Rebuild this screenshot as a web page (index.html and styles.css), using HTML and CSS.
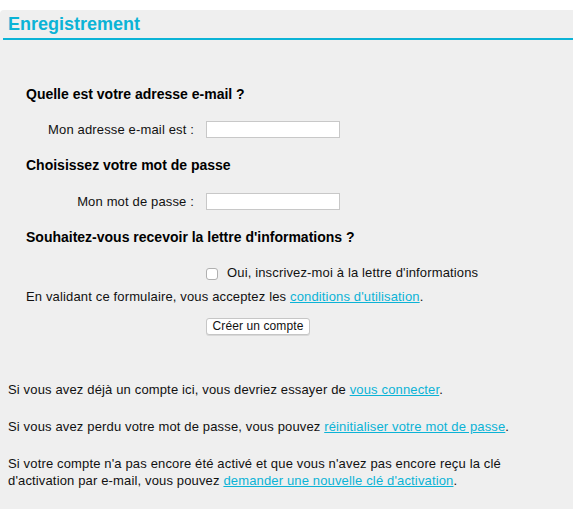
FILE: index.html
```html
<!DOCTYPE html>
<html lang="fr">
<head>
<meta charset="utf-8">
<title>Enregistrement</title>
<link rel="stylesheet" href="styles.css">
</head>
<body>
<div class="page">
  <h2 class="title">Enregistrement</h2>
  <form class="register">
    <h3 class="q">Quelle est votre adresse e-mail ?</h3>
    <div class="row row-email">
      <label class="lbl" for="email">Mon adresse e-mail est :</label>
      <input class="field" id="email" type="text">
    </div>
    <h3 class="q q2">Choisissez votre mot de passe</h3>
    <div class="row row-pw">
      <label class="lbl" for="pw">Mon mot de passe :</label>
      <input class="field" id="pw" type="password">
    </div>
    <h3 class="q q3">Souhaitez-vous recevoir la lettre d'informations ?</h3>
    <div class="row row-check">
      <span class="lbl"></span>
      <label class="check"><span class="box"></span>Oui, inscrivez-moi à la lettre d'informations</label>
    </div>
    <p class="terms">En validant ce formulaire, vous acceptez les <a href="#">conditions d'utilisation</a>.</p>
    <div class="row row-btn">
      <span class="lbl"></span>
      <button class="btn" type="button">Créer un compte</button>
    </div>
  </form>
  <div class="info">
    <p>Si vous avez déjà un compte ici, vous devriez essayer de <a href="#">vous connecter</a>.</p>
    <p>Si vous avez perdu votre mot de passe, vous pouvez <a href="#">réinitialiser votre mot de passe</a>.</p>
    <p class="last">Si votre compte n'a pas encore été activé et que vous n'avez pas encore reçu la clé d'activation par e-mail, vous pouvez <a href="#">demander une nouvelle clé d'activation</a>.</p>
  </div>
</div>
</body>
</html>
```
FILE: styles.css
```css
html, body {
  margin: 0;
  padding: 0;
  background: #ffffff;
}
body {
  font-family: "Liberation Sans", Arial, Helvetica, sans-serif;
  font-size: 13px;
  letter-spacing: 0.15px;
  color: #111;
}
.page {
  margin-top: 10px;
  background: #efefef;
  border-top-left-radius: 4px;
  min-height: 499px;
  overflow: hidden;
}
.title {
  margin: 0 0 0 3px;
  padding: 3px 0 0 5px;
  height: 25px;
  font-size: 18px;
  font-weight: bold;
  letter-spacing: 0;
  color: #0bb3d6;
  border-bottom: 2px solid #0bb3d6;
  line-height: 22px;
}
.register {
  padding: 45px 0 0 26px;
}
.q {
  margin: 0;
  font-size: 14px;
  font-weight: bold;
  letter-spacing: 0;
  line-height: 18px;
  color: #000;
}
.q2 { margin-top: 18px; }
.q3 { margin-top: 18px; }
.row {
  display: grid;
  grid-template-columns: 168px auto;
  column-gap: 12px;
  align-items: center;
}
.row-email { margin-top: 18px; }
.row-pw { margin-top: 19px; }
.row-check { margin-top: 18px; }
.row-btn { margin-top: 13px; }
.lbl {
  text-align: right;
  line-height: 17px;
}
.field {
  box-sizing: border-box;
  width: 134px;
  height: 17px;
  border: 1px solid #c8c8c8;
  background: #fff;
  margin: 0;
  padding: 0;
}
.check {
  display: flex;
  align-items: center;
  gap: 9px;
  line-height: 17px;
}
.box {
  box-sizing: border-box;
  width: 12px;
  height: 12px;
  margin-top: 2px;
  border: 1px solid #b0b0b0;
  border-radius: 3px;
  background: #fff;
}
.terms {
  margin: 7px 0 0;
  line-height: 17px;
}
a {
  color: #0bb3d6;
  text-decoration: underline;
}
.btn {
  justify-self: start;
  box-sizing: border-box;
  font-family: "Liberation Sans", Arial, sans-serif;
  font-size: 12px;
  letter-spacing: 0.1px;
  width: 104px;
  height: 17px;
  padding: 0;
  border: 1px solid #c6c6c6;
  border-radius: 3px;
  background: #fff;
  color: #111;
  line-height: 15px;
  box-shadow: 0 1px 0 #d8d8d8;
}
.info {
  padding: 46px 8px 20px;
}
.info p {
  margin: 0 0 20px;
  line-height: 17px;
}
.info p.last {
  padding-right: 40px;
}
```
